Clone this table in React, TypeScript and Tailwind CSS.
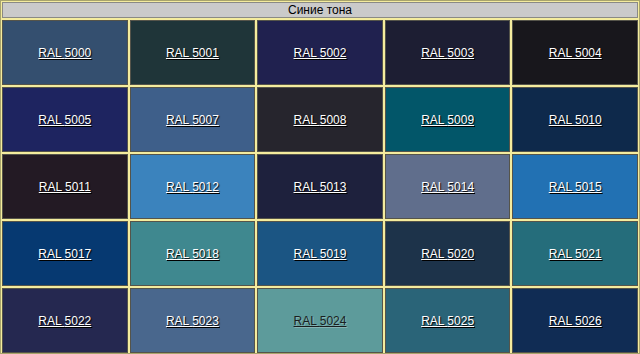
import React from "react";

interface Swatch {
  code: string;
  bg: string;
  dark?: boolean;
}

// blue RAL shades, row by row
const swatches: Swatch[] = [
  { code: "5000", bg: "bg-[#344f6f]" },
  { code: "5001", bg: "bg-[#1f3539]" },
  { code: "5002", bg: "bg-[#20214f]" },
  { code: "5003", bg: "bg-[#1d1e33]" },
  { code: "5004", bg: "bg-[#18171c]" },
  { code: "5005", bg: "bg-[#1e2460]" },
  { code: "5007", bg: "bg-[#3e5f8a]" },
  { code: "5008", bg: "bg-[#26252d]" },
  { code: "5009", bg: "bg-[#025669]" },
  { code: "5010", bg: "bg-[#0e294b]" },
  { code: "5011", bg: "bg-[#231a24]" },
  { code: "5012", bg: "bg-[#3b83bd]" },
  { code: "5013", bg: "bg-[#1e213d]" },
  { code: "5014", bg: "bg-[#606e8c]" },
  { code: "5015", bg: "bg-[#2271b3]" },
  { code: "5017", bg: "bg-[#063971]" },
  { code: "5018", bg: "bg-[#3f888f]" },
  { code: "5019", bg: "bg-[#1b5583]" },
  { code: "5020", bg: "bg-[#1d334a]" },
  { code: "5021", bg: "bg-[#256d7b]" },
  { code: "5022", bg: "bg-[#252850]" },
  { code: "5023", bg: "bg-[#49678d]" },
  { code: "5024", bg: "bg-[#5d9b9b]", dark: true },
  { code: "5025", bg: "bg-[#2a6478]" },
  { code: "5026", bg: "bg-[#102c54]" },
];

const App = () => {
  return (
    <div
      className="w-[640px] h-[354px] overflow-hidden border border-[#a8a46c] bg-[#f4ec9e] p-[1px] flex flex-col gap-[2px]"
      style={{ fontFamily: '"Liberation Sans", Arial, sans-serif' }}
    >
      <div className="h-[16px] border border-[#8a8a84] bg-[#cacaca] text-center text-[12px] leading-[14px] text-black">
        Синие тона
      </div>
      <div className="grid grid-cols-5 grid-rows-[repeat(5,65px)] gap-[2px]">
        {swatches.map((s) => (
          <div
            key={s.code}
            className={`${s.bg} border border-[#55544a] flex items-center justify-center`}
          >
            {s.dark ? (
              <a className="text-[12px] text-[#1a1f1f] underline [text-shadow:1px_1px_0_rgba(255,255,255,0.25)]">
                RAL {s.code}
              </a>
            ) : (
              <a className="text-[12px] text-white underline [text-shadow:1px_1px_1px_#000]">
                RAL {s.code}
              </a>
            )}
          </div>
        ))}
      </div>
    </div>
  );
};

export default App;
